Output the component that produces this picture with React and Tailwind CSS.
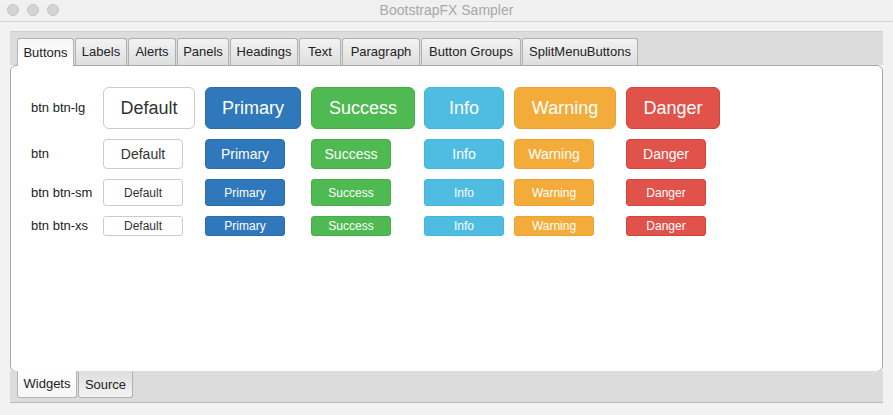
import React from "react";

const tabs = [
  { name: "Buttons", w: "w-[57px]" },
  { name: "Labels", w: "w-[52px]" },
  { name: "Alerts", w: "w-[48px]" },
  { name: "Panels", w: "w-[52px]" },
  { name: "Headings", w: "w-[68px]" },
  { name: "Text", w: "w-[42px]" },
  { name: "Paragraph", w: "w-[78px]" },
  { name: "Button Groups", w: "w-[100px]" },
  { name: "SplitMenuButtons", w: "w-[116px]" },
];

// colour per variant
const variants = {
  Default: "bg-white border-[#cccccc] text-[#333333]",
  Primary: "bg-[#2f78bb] border-[#2e6da4] text-white",
  Success: "bg-[#4fb952] border-[#46ad4a] text-white",
  Info: "bg-[#4fbde2] border-[#46b4d8] text-white",
  Warning: "bg-[#f3ac3a] border-[#eea236] text-white",
  Danger: "bg-[#e0524a] border-[#d4433c] text-white",
};

const lgWidths = {
  Default: "w-[92px]",
  Primary: "w-[96px]",
  Success: "w-[104px]",
  Info: "w-[80px]",
  Warning: "w-[102px]",
  Danger: "w-[94px]",
};

const rows = [
  { label: "btn btn-lg", size: "lg", h: "h-[42px]", cls: "text-[18px] rounded-[6px]" },
  { label: "btn", size: "md", h: "h-[30px]", cls: "text-[14px] rounded-[4px]" },
  { label: "btn btn-sm", size: "sm", h: "h-[27px]", cls: "text-[12px] rounded-[3px]" },
  { label: "btn btn-xs", size: "xs", h: "h-[20px]", cls: "text-[12px] rounded-[3px]" },
];

const names = ["Default", "Primary", "Success", "Info", "Warning", "Danger"];

const Btn = ({ name, row }) => (
  <div
    className={`${row.h} ${row.cls} ${variants[name]} ${row.size === "lg" ? lgWidths[name] : "w-[80px]"} border flex items-center justify-center leading-none`}
  >
    {name}
  </div>
);

export default function App() {
  return (
    <div className="w-[893px] h-[415px] bg-[#f2f2f2] overflow-hidden" style={{ fontFamily: '"Liberation Sans", Arial, sans-serif' }}>
      {/* title bar */}
      <div className="h-[22px] relative flex items-center justify-center border-b border-[#d6d6d6] bg-[#f0f0f0]">
        <div className="absolute left-[7px] top-[4px] flex gap-[8px]">
          <span className="w-[12px] h-[12px] rounded-full bg-[#d4d4d4] border border-[#c6c6c6]"></span>
          <span className="w-[12px] h-[12px] rounded-full bg-[#d4d4d4] border border-[#c6c6c6]"></span>
          <span className="w-[12px] h-[12px] rounded-full bg-[#d4d4d4] border border-[#c6c6c6]"></span>
        </div>
        <span className="text-[14px] text-[#a8a8a8]">BootstrapFX Sampler</span>
      </div>

      <div className="pl-[10px] pr-[10px] pt-[9px]">
        {/* tab header */}
        <div className="h-[34px] bg-[#dcdcdc] border-t border-[#d0d0d0] flex items-end gap-[1px] pl-[7px]">
          {tabs.map((t, i) =>
            i === 0 ? (
              <div
                key={t.name}
                className={`${t.w} h-[28px] -mb-[1px] relative z-10 flex items-center justify-center text-[13px] text-[#222] bg-gradient-to-b from-[#f6f6f6] to-white border border-b-0 border-[#b4b4b4] rounded-t-[3px]`}
              >
                {t.name}
              </div>
            ) : (
              <div
                key={t.name}
                className={`${t.w} h-[27px] flex items-center justify-center text-[13px] text-[#222] bg-gradient-to-b from-[#f3f3f3] to-[#dedede] border border-b-0 border-[#b0b0b0] rounded-t-[3px]`}
              >
                {t.name}
              </div>
            )
          )}
        </div>

        {/* content */}
        <div className="h-[307px] bg-white border border-[#a9a9a9] rounded-[6px] pl-[20px] pt-[21px]">
          <div className="grid grid-cols-[72px_102px_106px_113px_90px_112px_94px] gap-y-[10px] items-center">
            {rows.map((row) => (
              <React.Fragment key={row.label}>
                <div className="text-[13px] text-[#222] whitespace-nowrap">{row.label}</div>
                {names.map((n) => (
                  <Btn key={n} name={n} row={row} />
                ))}
              </React.Fragment>
            ))}
          </div>
        </div>

        {/* bottom tab bar */}
        <div className="h-[32px] bg-[#dcdcdc] border-b border-[#b8b8b8] flex items-start gap-[1px] pl-[7px] -mt-[1px]">
          <div className="w-[60px] h-[27px] relative z-10 flex items-center justify-center text-[13px] text-[#222] bg-gradient-to-t from-[#f6f6f6] to-white border border-t-0 border-[#b4b4b4] rounded-b-[3px]">
            Widgets
          </div>
          <div className="w-[55px] h-[26px] mt-[1px] flex items-center justify-center text-[13px] text-[#222] bg-gradient-to-t from-[#f3f3f3] to-[#dedede] border border-t-0 border-[#b0b0b0] rounded-b-[3px]">
            Source
          </div>
        </div>
      </div>
    </div>
  );
}
